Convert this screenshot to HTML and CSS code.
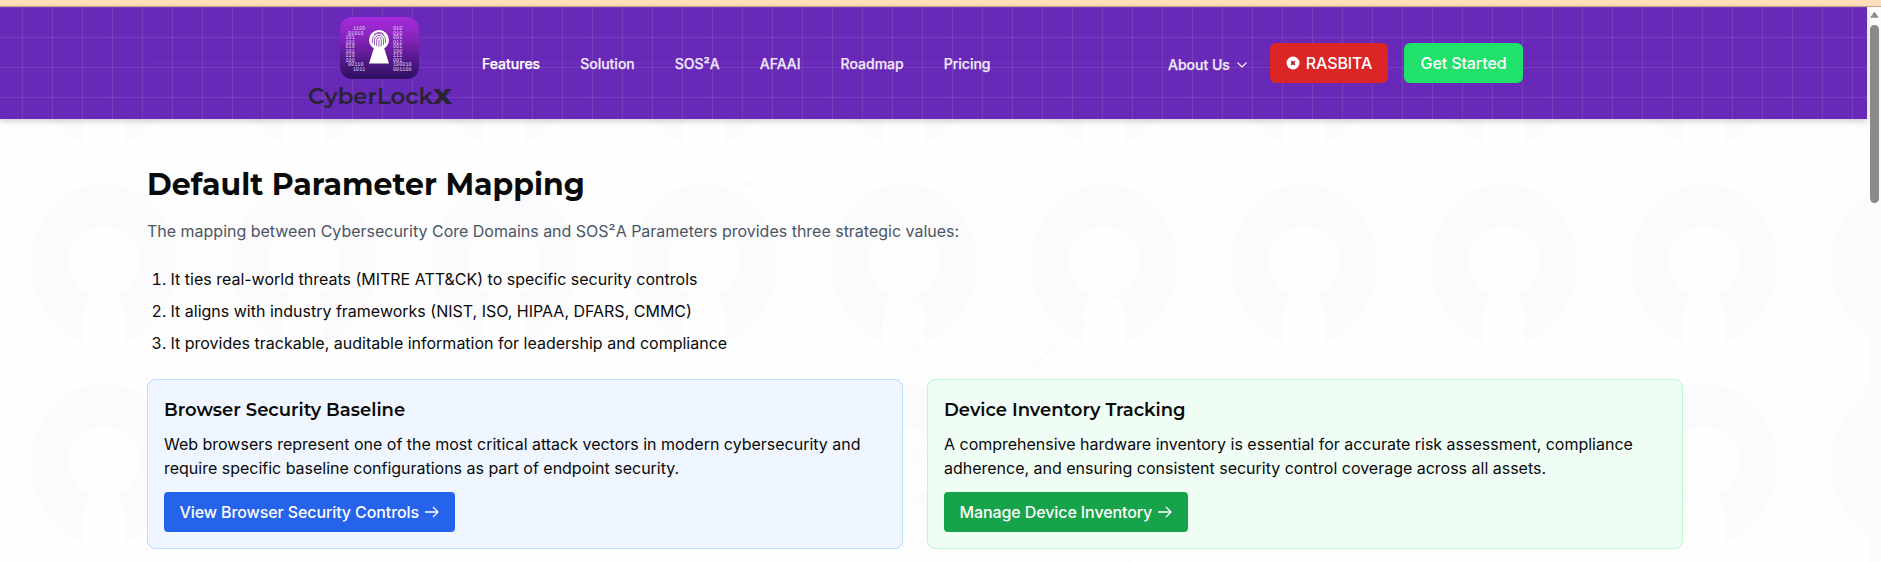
FILE: index.html
```
<!DOCTYPE html>
<html lang="en">
<head>
<meta charset="utf-8">
<title>CyberLockX</title>
<link rel="stylesheet" href="styles.css">
</head>
<body>
<svg class="backdrop" width="1867" height="562" aria-hidden="true">
  <defs>
    <pattern id="keyholes" width="200" height="200" patternUnits="userSpaceOnUse" x="4" y="163">
      <ellipse cx="100" cy="101" rx="73" ry="81" fill="#fbfbfe"/>
      <circle cx="100" cy="99" r="36" fill="#fefefe"/>
      <path d="M79 185V153Q79 139 90 133H110Q121 139 121 153V185Z" fill="#fefefe"/>
    </pattern>
    <pattern id="binary" class="binary" width="300" height="300" patternUnits="userSpaceOnUse" x="0" y="110">
      <text x="162" y="17">00111100</text>
      <text x="-8" y="46">10101011</text><text x="292" y="46">10101011</text>
      <text x="132" y="77">01011001</text>
      <text x="33" y="107">11100101</text>
      <text x="152" y="137">00101100</text>
      <text x="2" y="226">10110101</text>
      <text x="122" y="257">01001001</text>
      <text x="42" y="286">11001010</text>
    </pattern>
  </defs>
  <rect width="1867" height="562" fill="url(#keyholes)"/>
  <rect width="1867" height="562" fill="url(#binary)"/>
  <path d="M914.5 119V562M500 348.5H1260M683 119L1130 562M1187 238L880 491" stroke="#fafafc" stroke-width="1.5" fill="none"/>
</svg>
<div class="topstrip"></div>
<div class="frame">
  <div class="page">
    <header class="header">
      <svg class="gridlines" width="1867" height="112" aria-hidden="true">
        <defs>
          <pattern id="grid" width="60" height="60" patternUnits="userSpaceOnUse" x="22" y="0">
            <path d="M.5 0V60M30.5 0V60M0 .5H60M0 30.5H60" stroke="#b4ccc8" stroke-opacity=".13"/>
            <rect x="29" y="29.5" width="2" height="2" fill="#fff" fill-opacity=".06"/>
          </pattern>
        </defs>
        <rect width="1867" height="112" fill="url(#grid)"/>
        <path d="M152 56H1677" stroke="#fff" stroke-opacity=".025" stroke-width="2"/>
      </svg>
      <div class="bar">
        <svg class="logo" width="146" height="98" viewBox="0 0 146 98">
          <defs>
            <linearGradient id="badge" x1="0" y1="0" x2="0" y2="1">
              <stop offset="0" stop-color="#a52bdc"/><stop offset=".25" stop-color="#9026c5"/><stop offset="1" stop-color="#2b1060"/>
            </linearGradient>
          </defs>
          <rect x="33" y="3" width="79" height="62" rx="12" fill="url(#badge)"/>
          <g class="bits">
            <text x="46" y="16">1100</text><text x="41" y="20.500">01010</text>
            <text x="38.500" y="25">101</text><text x="38.500" y="29.500">101</text><text x="38.500" y="34">010</text><text x="38.500" y="38.500">101</text><text x="38.500" y="43">110</text><text x="38.500" y="47.500">100</text>
            <text x="41" y="52">00110</text><text x="46" y="56.500">1011</text>
            <text x="86" y="16">010</text><text x="86" y="20.500">010</text><text x="86" y="25">001</text><text x="86" y="29.500">011</text><text x="86" y="34">001</text><text x="86" y="38.500">100</text><text x="86" y="43">111</text><text x="86" y="47.500">001</text>
            <text x="86" y="52">100010</text><text x="86" y="56.500">001100</text>
          </g>
          <circle cx="72" cy="26" r="10" fill="#fff"/>
          <path d="M67.500 32H76.500L82 49.500H62Z" fill="#fff"/>
          <g fill="none" stroke="#7a35a8" stroke-width=".8">
            <path d="M65.500 29V26a6.500 6.500 0 0 1 13 0v3M67.500 31V26a4.500 4.500 0 0 1 9 0v5M69.700 32V26a2.300 2.300 0 0 1 4.600 0v6M72 26v7M67 20.500a8 8 0 0 1 10 0"/>
          </g>
          <text class="wordmark" x="1" y="90" textLength="125" lengthAdjust="spacingAndGlyphs">CyberLock</text>
          <text class="wordmark heavy" x="126" y="90" textLength="19" lengthAdjust="spacingAndGlyphs">X</text>
        </svg>
        <nav class="links">
          <a class="current">Features</a><a>Solution</a><a>SOS²A</a><a>AFAAI</a><a>Roadmap</a><a>Pricing</a>
        </nav>
        <div class="actions">
          <a class="about">About Us
            <svg width="10" height="6" viewBox="0 0 10 6"><path d="M.8.8L5 5L9.200.8" fill="none" stroke="#fff" stroke-width="1.200" stroke-linecap="round"/></svg>
          </a>
          <a class="btn red"><svg width="14" height="14" viewBox="0 0 14 14"><circle cx="7" cy="7" r="6.500" fill="#fff"/><path d="M5.200 5.200L8.800 8.800M8.800 5.200L5.200 8.800" stroke="#b91c1c" stroke-width="1.700"/></svg>RASBITA</a>
          <a class="btn lime">Get Started</a>
        </div>
      </div>
    </header>
    <main class="content">
      <h1>Default Parameter Mapping</h1>
      <p class="lead">The mapping between Cybersecurity Core Domains and SOS²A Parameters provides three strategic values:</p>
      <ol class="values">
        <li>It ties real-world threats (MITRE ATT&amp;CK) to specific security controls</li>
        <li>It aligns with industry frameworks (NIST, ISO, HIPAA, DFARS, CMMC)</li>
        <li>It provides trackable, auditable information for leadership and compliance</li>
      </ol>
      <div class="cards">
        <section class="card blue">
          <h2>Browser Security Baseline</h2>
          <p>Web browsers represent one of the most critical attack vectors in modern cybersecurity and require specific baseline configurations as part of endpoint security.</p>
          <a class="cta">View Browser Security Controls<svg class="arrow" viewBox="0 0 14 12"><path d="M0 6H13M8 1L13 6L8 11"/></svg></a>
        </section>
        <section class="card green">
          <h2>Device Inventory Tracking</h2>
          <p>A comprehensive hardware inventory is essential for accurate risk assessment, compliance adherence, and ensuring consistent security control coverage across all assets.</p>
          <a class="cta">Manage Device Inventory<svg class="arrow" viewBox="0 0 14 12"><path d="M0 6H13M8 1L13 6L8 11"/></svg></a>
        </section>
      </div>
    </main>
  </div>
  <div class="scrollbar">
    <svg width="10" height="8" viewBox="0 0 10 8"><path d="M5 1L9 6.500H1Z" fill="#8b8b8b" stroke="#8b8b8b" stroke-linejoin="round"/></svg>
    <div class="thumb"></div>
  </div>
</div>
</body>
</html>
```
FILE: styles.css
```
* { box-sizing: border-box; }
body {
  margin: 0;
  height: 562px;
  overflow: hidden;
  position: relative;
  background: #fefefe;
  color: #0a0a0a;
  font: 16px/24px Inter, sans-serif;
}
h1, h2, p, ol { margin: 0; }
.backdrop { position: absolute; left: 0; top: 0; z-index: -1; }
.binary text { font: 9px "Liberation Mono", monospace; fill: #fafafb; }
.topstrip { height: 7px; background: #ffdfb9; border-bottom: 1px solid #c9aa94; }
.frame { display: flex; height: 555px; }
.page { width: 1867px; }
.header {
  position: relative;
  height: 112px;
  background: #6828b8;
  box-shadow: 0 2px 6px rgba(0, 0, 0, .2);
}
.gridlines { position: absolute; left: 0; top: 0; }
.bar { position: relative; display: flex; height: 112px; padding: 7px 0 0 307px; }
.logo { flex: none; }
.bits { font: 5px "Liberation Mono", monospace; letter-spacing: .1px; fill: #e2d2f2; }
.wordmark { font: 600 22px Montserrat, Inter, sans-serif; fill: #2a2333; }
.heavy { font-weight: 800; }
.links { display: flex; gap: 40px; margin-left: 29px; padding-top: 38px; width: 686px; font-size: 14px; font-weight: 500; color: #efe7f8; -webkit-text-stroke: .25px; }
.current { color: #fff; }
.actions { display: flex; align-items: flex-start; padding-top: 29px; }
.about { display: flex; align-items: center; gap: 7px; width: 102px; padding-top: 10px; color: #efe7f8; font-size: 14px; font-weight: 500; white-space: nowrap; -webkit-text-stroke: .25px; }
.btn { display: flex; align-items: center; justify-content: center; gap: 6px; height: 40px; border-radius: 6px; color: #fff; font-weight: 500; letter-spacing: -.1px; }
.red { width: 118px; background: #dc2626; }
.lime { width: 119px; margin-left: 16px; background: #20e16a; }
.content { width: 1536px; margin-left: 147px; padding-top: 48px; }
h1, h2 { font-family: Montserrat, Inter, sans-serif; white-space: nowrap; }
h1 { font-size: 30px; line-height: 36px; font-weight: 700; }
h2 { font-size: 18px; line-height: 28px; font-weight: 600; }
.lead { margin-top: 16px; color: #4b5563; letter-spacing: -.01px; }
.values { margin-top: 24px; padding-left: 23.5px; display: grid; gap: 8px; }
.cards { display: grid; grid-template-columns: 1fr 1fr; gap: 24px; margin-top: 24px; }
.card { height: 170px; padding: 16px; border: 1px solid; border-radius: 8px; }
.blue { background: #eff6ff; border-color: #bfdbfe; }
.green { background: #f0fdf4; border-color: #bbf7d0; }
.card p { margin: 8px 0 12px; letter-spacing: -.01px; }
.cta { display: inline-flex; align-items: center; height: 40px; padding: 0 16.5px 0 15.5px; border-radius: 4px; color: #fff; font-weight: 500; letter-spacing: -.1px; }
.arrow { width: 14px; height: 12px; margin-left: 5.5px; fill: none; stroke: #fff; stroke-width: 1.3; }
.blue .cta { background: #2563eb; }
.green .cta { background: #16a34a; }
.scrollbar { width: 14px; padding: 4px 0 0 3px; background: #fcfcfc; }
.scrollbar svg { display: block; width: 9px; }
.thumb { width: 9px; height: 178px; margin-top: 6px; border-radius: 5px; background: #8b8b8b; }
```
